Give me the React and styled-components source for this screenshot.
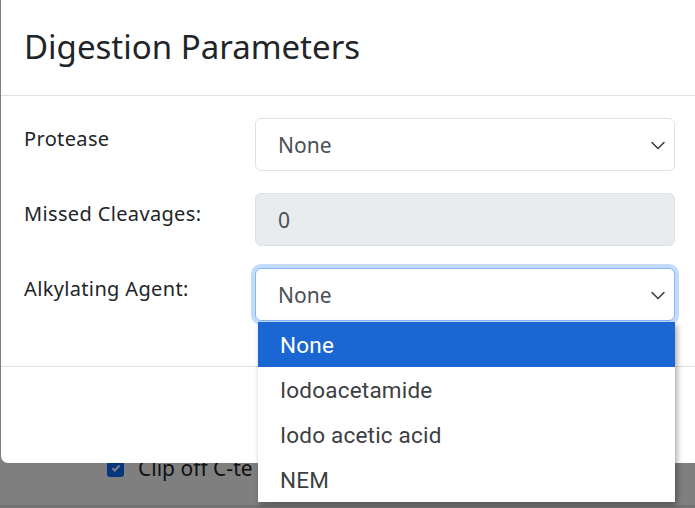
import styled, { createGlobalStyle } from "styled-components";

const GlobalStyle = createGlobalStyle`
  html, body {
    margin: 0;
    padding: 0;
    overflow: hidden;
    background: #808080;
  }
  * { box-sizing: border-box; }
`;

// ---------- page behind the modal (dimmed by backdrop) ----------
const Behind = styled.div`
  height: 508px;
  background: #ffffff;
  position: relative;
  font-family: "Noto Sans", "Open Sans", sans-serif;
`;

const BehindRow = styled.div`
  display: flex;
  align-items: center;
  gap: 14px;
  padding: 454px 0 0 107px;
  font-size: 21px;
  color: #212529;
`;

const Check = styled.span`
  width: 17px;
  height: 17px;
  border-radius: 3px;
  background: #0d6efd;
  display: inline-flex;
  align-items: center;
  justify-content: center;
`;

const Backdrop = styled.div`
  position: absolute;
  inset: 0;
  background: rgba(0, 0, 0, 0.5);
  border-bottom: 3px solid rgba(0, 0, 0, 0.1);
`;

// ---------- modal ----------
const Modal = styled.div`
  position: absolute;
  top: -6px;
  left: 1px;
  width: 700px;
  height: 469px;
  background: #fff;
  border-radius: 7px;
  display: flex;
  flex-direction: column;
  font-family: "Noto Sans", "Open Sans", sans-serif;
  color: #212529;
`;

const Header = styled.div`
  height: 102px;
  padding: 4px 23px 0;
  display: flex;
  align-items: center;
  border-bottom: 1px solid #dee2e6;
`;

const Title = styled.h5`
  margin: 0;
  font-size: 33px;
  font-weight: 400;
  letter-spacing: 0px;
`;

const Body = styled.div`
  padding: 22px 24px 45px 23px;
  display: flex;
  flex-direction: column;
  gap: 22px;
  border-bottom: 1px solid #dee2e6;
`;

const Row = styled.div`
  display: grid;
  grid-template-columns: 231px 420px;
  align-items: start;
`;

const Label = styled.label`
  font-size: 20px;
  letter-spacing: 0.35px;
  padding-top: 7px;
`;

const Control = styled.div`
  position: relative;
  height: 53px;
  border: 1px solid ${(p) => (p.$focus ? "#86b7fe" : "#dee2e6")};
  border-radius: 6px;
  background: ${(p) => (p.$disabled ? "#e9ecef" : "#fff")};
  box-shadow: ${(p) => (p.$focus ? "0 0 0 4px rgba(13,110,253,0.25)" : "none")};
  display: flex;
  align-items: center;
  justify-content: space-between;
  padding: 0 8px 0 22px;
  font-size: 21px;
  color: #495057;
`;

const Chevron = () => (
  <svg width="16" height="16" viewBox="0 0 16 16" fill="none">
    <path d="M2 5.5l6 6 6-6" stroke="#343a40" strokeWidth="1.5" strokeLinecap="round" strokeLinejoin="round" />
  </svg>
);

const Footer = styled.div`
  flex: 1;
`;

// ---------- native-like dropdown list ----------
const ListBox = styled.ul`
  position: absolute;
  top: 53px;
  left: 2px;
  right: -1px;
  margin: 0;
  padding: 0;
  list-style: none;
  background: #fff;
  box-shadow: 2px 3px 6px rgba(0, 0, 0, 0.35);
  z-index: 5;
  font-family: Roboto, "Liberation Sans", sans-serif;
`;

const Option = styled.li`
  height: 45px;
  display: flex;
  align-items: center;
  padding-left: 22px;
  font-size: 22.5px;
  letter-spacing: 0.2px;
  color: ${(p) => (p.$active ? "#fff" : "#3c4043")};
  background: ${(p) => (p.$active ? "#1a66d2" : "#fff")};
`;

const agents = ["None", "Iodoacetamide", "Iodo acetic acid", "NEM"];

export default function App() {
  return (
    <>
      <GlobalStyle />
      <Behind>
        <BehindRow>
          <Check>
            <svg width="12" height="12" viewBox="0 0 12 12">
              <path d="M2.5 6.2l2.3 2.3 4.7-5" stroke="#fff" strokeWidth="2" fill="none" />
            </svg>
          </Check>
          <span>Clip off C-te</span>
        </BehindRow>
        <Backdrop />
        <Modal>
          <Header>
            <Title>Digestion Parameters</Title>
          </Header>
          <Body>
            <Row>
              <Label>Protease</Label>
              <Control>
                None
                <Chevron />
              </Control>
            </Row>
            <Row>
              <Label>Missed Cleavages:</Label>
              <Control $disabled>0</Control>
            </Row>
            <Row>
              <Label>Alkylating Agent:</Label>
              <Control $focus>
                None
                <Chevron />
                <ListBox>
                  {agents.map((a, i) => (
                    <Option key={a} $active={i === 0}>
                      {a}
                    </Option>
                  ))}
                </ListBox>
              </Control>
            </Row>
          </Body>
          <Footer />
        </Modal>
      </Behind>
    </>
  );
}
